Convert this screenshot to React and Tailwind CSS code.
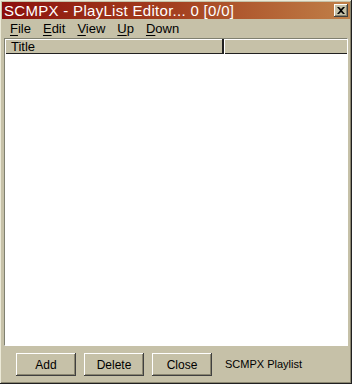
import React from 'react';

// --- classic 3D bevels ---
const raised = 'shadow-[inset_-1px_-1px_0_#404040,inset_1px_1px_0_#ffffff,inset_-2px_-2px_0_#8a8670]';

const MenuItem = ({ label }) => (
  <span className="px-[6px]">
    <span className="underline underline-offset-2">{label[0]}</span>
    {label.slice(1)}
  </span>
);

const Btn = ({ children }) => (
  <button className={`w-[60px] h-[23px] bg-[#c6c1a8] text-[12px] text-black ${raised}`}>
    {children}
  </button>
);

export default function App() {
  return (
    <div
      className="w-[352px] h-[384px] bg-[#c6c1a8] flex flex-col p-[2px] shadow-[inset_-1px_-1px_0_#202020,inset_1px_1px_0_#ecead8,inset_-2px_-2px_0_#8a8670]"
      style={{ fontFamily: '"Liberation Sans", Arial, sans-serif' }}
    >
      {/* title bar */}
      <div className="h-[17px] flex items-center justify-between bg-gradient-to-r from-[#8c0c0c] via-[#a4401f] to-[#c08048] pl-[2px] pr-[2px]">
        <span className="text-white text-[15px] leading-none tracking-[0.3px]">SCMPX - PlayList Editor... 0 [0/0]</span>
        <div className={`w-[14px] h-[13px] bg-[#c6c1a8] flex items-center justify-center ${raised}`}>
          <svg width="8" height="7" viewBox="0 0 8 7">
            <path d="M0 0h2l2 2 2-2h2L5 3.5 8 7H6L4 5 2 7H0l3-3.5z" fill="#000" />
          </svg>
        </div>
      </div>

      {/* menu bar */}
      <div className="h-[19px] flex items-center text-[13px] text-black pl-[2px]">
        <MenuItem label="File" />
        <MenuItem label="Edit" />
        <MenuItem label="View" />
        <MenuItem label="Up" />
        <MenuItem label="Down" />
      </div>

      {/* list view */}
      <div className="mx-[2px] h-[308px] flex flex-col border-l border-t border-[#808070] border-r border-b border-r-[#ffffff] border-b-[#ffffff]">
        <div className="flex h-[15px] bg-[#c6c1a8] shadow-[inset_0_1px_0_#ffffff]">
          <div className="w-[219px] text-[13px] leading-[15px] pl-[6px] border-r-2 border-r-[#202020] shadow-[inset_1px_0_0_#ffffff,inset_0_-1px_0_#202020]">
            Title
          </div>
          <div className="flex-1 shadow-[inset_1px_0_0_#ffffff,inset_0_-1px_0_#202020]" />
        </div>
        <div className="flex-1 bg-white" />
      </div>

      {/* footer */}
      <div className="flex items-center gap-[8px] pl-[14px] pt-[7px]">
        <Btn>Add</Btn>
        <Btn>Delete</Btn>
        <Btn>Close</Btn>
        <span className="ml-[5px] text-[11px] text-black">SCMPX Playlist</span>
      </div>
    </div>
  );
}
